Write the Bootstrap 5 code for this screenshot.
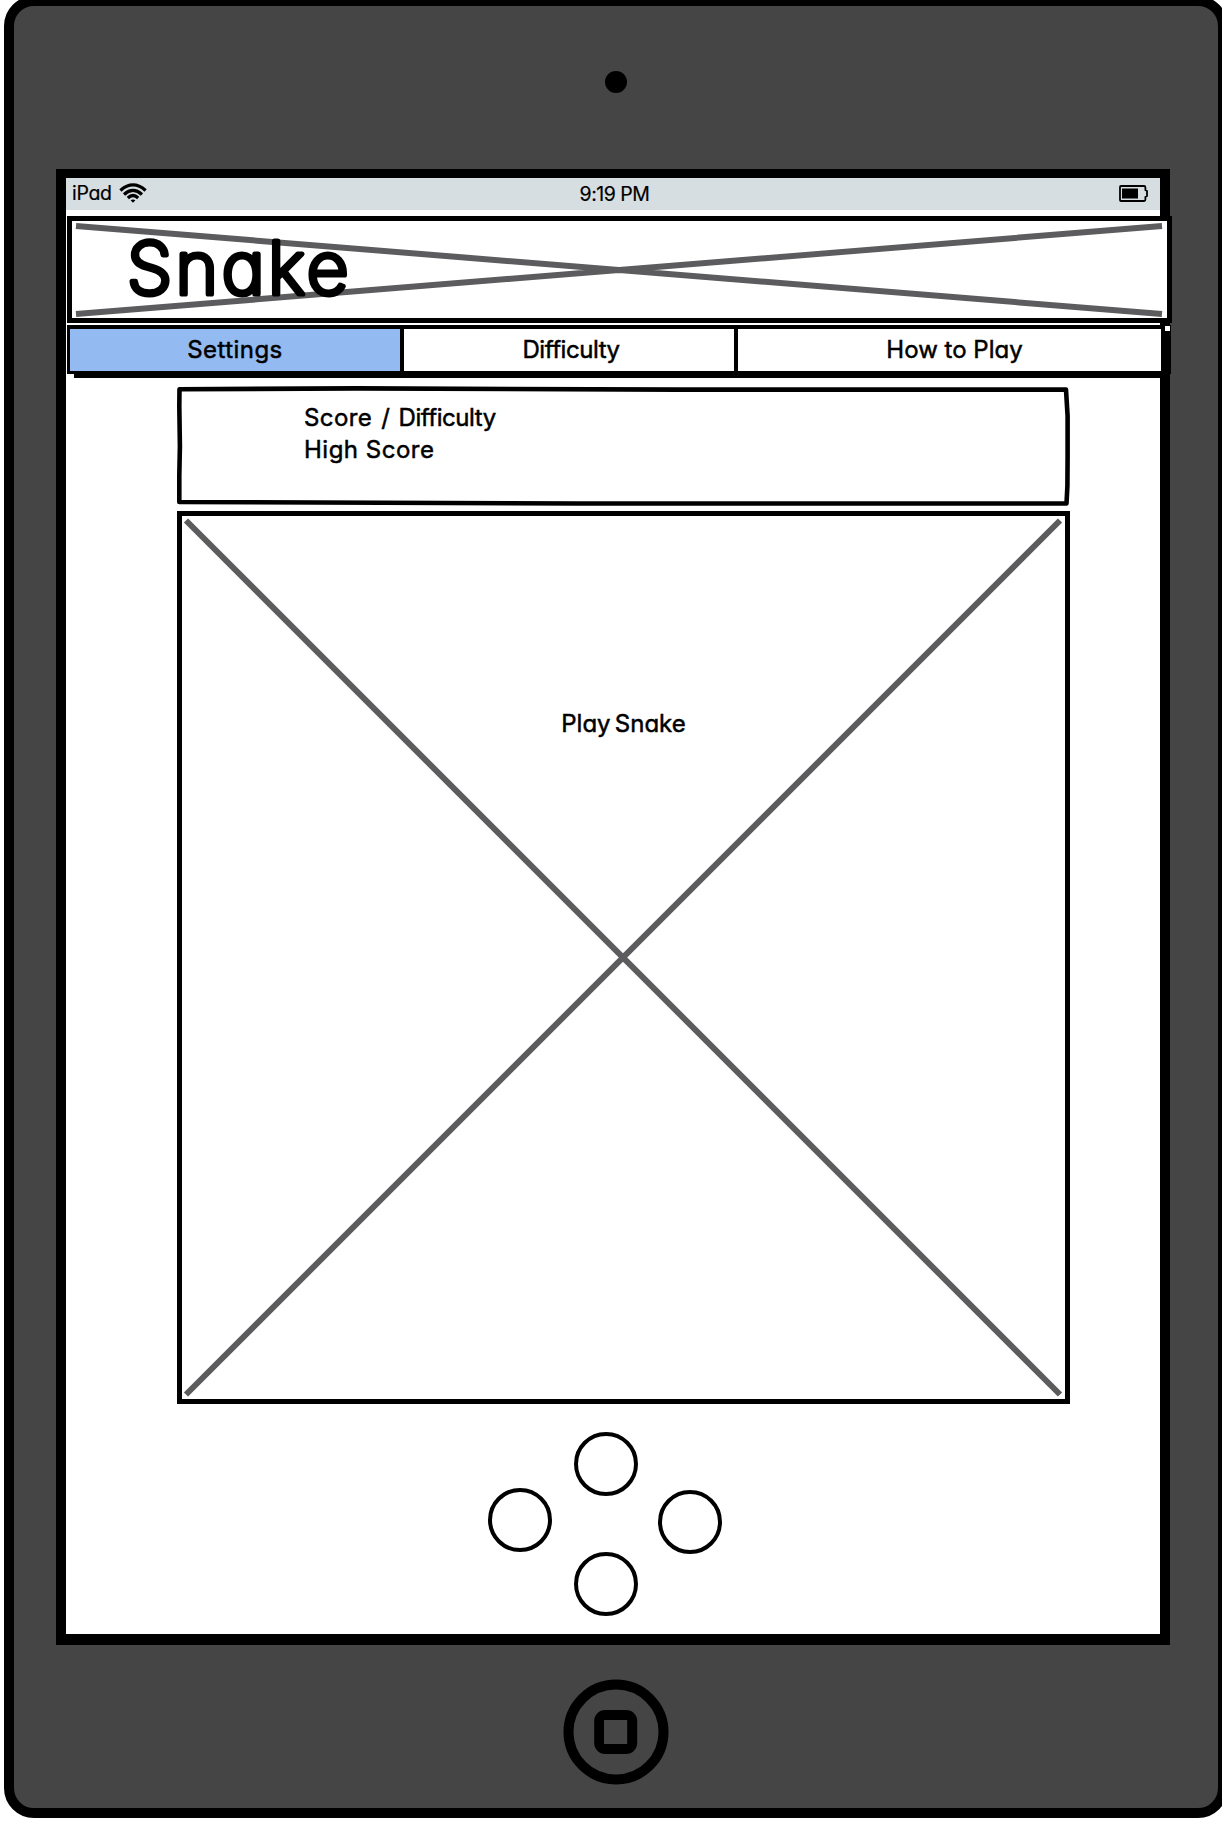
<!DOCTYPE html>
<html lang="en">
<head>
<meta charset="utf-8">
<meta name="viewport" content="width=device-width, initial-scale=1">
<title>Snake</title>
<link href="https://cdn.jsdelivr.net/npm/bootstrap@5.3.0/dist/css/bootstrap.min.css" rel="stylesheet">
<style>
  html, body { height: 1822px; overflow: hidden; }
  body { background: #fff; color: #000; font-family: Inter, "Open Sans", sans-serif; font-feature-settings: "cv11", "ss03"; }
  .device { width: 1224px; height: 1822px; margin: -4px 0 0 4px; border: 10px solid #000; border-radius: 30px; background: #454545; flex: none; }
  .bezel-top { height: 163px; }
  .bezel-top, .bezel-bottom { width: 1204px; }
  .camera { width: 22px; height: 22px; background: #000; margin-top: -11px; }
  .screen { width: 1114px; height: 1476px; margin-left: 42px; border: solid #000; border-width: 9px 10px 11px; background: #fff; flex: none; }
  .statusbar { height: 32px; background: #d7dee1; font-size: 19.5px; line-height: 32px; flex: none; margin-bottom: 6px; padding: 0 12px 2px 6px; }
  .statusbar > div { width: 33.333%; }
  .net { margin-right: 7px; letter-spacing: -.3px; -webkit-text-stroke: .2px #000; }
  .clock { letter-spacing: -.5px; position: relative; left: 4.500px; -webkit-text-stroke: .2px #000; }
  .sketch { position: relative; flex: none; }
  .sketch > svg { position: absolute; inset: 0; width: 100%; height: 100%; overflow: visible; }
  .banner { width: 1105px; height: 107px; margin-left: 1px; border: 5px solid #000; background: #fff; margin-bottom: 2px; }
  .banner > svg { left: -5px; top: -5px; width: 1105px; height: 107px; }
  .banner text { font-size: 72.5px; font-weight: 200; stroke: #000; stroke-width: 5.2px; stroke-linejoin: round; stroke-linecap: round; }
  .tabs { width: 1104px; height: 49px; margin-left: 1px; border: solid #000; border-width: 4px 10px 3px 3px; flex: none; background: #fff; position: relative; }
  .tabs::after { content: ""; position: absolute; right: -9px; top: -3px; width: 5px; height: 5px; background: #fff; }
  .tabs .nav-link { padding: 0; color: #000; font-size: 24px; line-height: 42px; border-radius: 0; text-align: center; -webkit-text-stroke: .5px #000; }
  .tab-a { width: 330px; background: #94baf2; letter-spacing: .45px; }
  .tab-b { width: 338px; border: solid #000; border-width: 0 4px; }
  .tabs .tab-b { letter-spacing: -.45px; padding-left: 4px; }
  .tab-c { flex: 1; }
  .tabs .tab-c { padding-left: 10px; }
  .tab-rule { height: 4px; margin-left: 8px; background: #000; margin-bottom: 8px; flex: none; }
  .score { width: 893px; height: 120px; margin-left: 111px; margin-bottom: 5px; padding: 16px 0 0 127px; font-size: 24px; line-height: 32px; -webkit-text-stroke: .5px #000; }
  .score .line-a { letter-spacing: -.45px; word-spacing: 2.8px; }
  .score .label { letter-spacing: .4px; }
  .score .line-b { letter-spacing: .5px; }
  .board { width: 893px; height: 893px; margin-left: 111px; border: 5px solid #000; font-size: 24px; padding-top: 190px; line-height: 36px; -webkit-text-stroke: .5px #000; word-spacing: -2.500px; }
  .board > svg { left: -5px; top: -5px; width: 893px; height: 893px; }
  .board p { position: relative; }
  .pad { width: 234px; margin: 28px 0 0 422px; flex: none; }
  .key { width: 64px; height: 64px; border: 4px solid #000; background: #fff; border-radius: 50%; padding: 0; }
  .key-up, .key-down { margin-left: 2px; }
  .pad-mid { height: 66px; margin: -8px 0 -2px; }
  .home { display: block; margin-top: 34px; }
</style>
</head>
<body>
<div class="device d-flex flex-column">
  <div class="bezel-top d-flex justify-content-center align-items-center">
    <div class="camera rounded-circle"></div>
  </div>

  <main class="screen d-flex flex-column">
    <div class="statusbar d-flex">
      <div class="d-flex align-items-center"><span class="net">iPad</span>
        <svg class="wifi" width="28" height="20" viewBox="0 0 28 20" fill="none" stroke="#000" stroke-width="3.300"><path d="M1.400 7.400Q14-3.600 26.600 7.400M5 11.400Q14 3.400 23 11.400M8.800 15Q14 10.200 19.200 15"/><path d="M11.600 17.300Q14 15.600 16.400 17.300L14 19.800Z" fill="#000" stroke="none"/></svg>
      </div>
      <div class="text-center"><span class="clock">9:19 PM</span></div>
      <div class="d-flex justify-content-end align-items-center">
        <svg class="battery" width="29" height="17" viewBox="0 0 29 17"><path d="M2 1H25Q26.400 1 26.400 2.500V5L28 6V11L26.400 12V14.500Q26.400 16 25 16H2Q1 16 1 15V2Q1 1 2 1Z" fill="none" stroke="#000" stroke-width="1.800"/><path d="M3 3.500H19V13.500H3Z"/></svg>
      </div>
    </div>

    <header class="sketch banner">
      <svg viewBox="0 0 1105 107"><path d="M9 10L1095 98M9 98L1095 10" stroke="#5c5c5e" stroke-width="6"/><text x="60" y="78" textLength="221.500">Snake</text></svg>
    </header>

    <nav class="tabs nav flex-nowrap">
      <a class="nav-link tab-a active" href="#">Settings</a>
      <a class="nav-link tab-b" href="#">Difficulty</a>
      <a class="nav-link tab-c" href="#">How to Play</a>
    </nav>
    <div class="tab-rule"></div>

    <section class="sketch score">
      <svg viewBox="0 0 893 120" fill="none" stroke="#000" stroke-width="4.600" stroke-linejoin="round"><path d="M2.500 3.200L180 2.400L500 3.600H889L890.600 30V70L890.400 100L889.500 117.500L400 117.500L2.300 116V90L2.900 60L2.300 20Z"/></svg>
      <div class="line-a"><span class="label">Score</span> / Difficulty</div>
      <div class="line-b">High Score</div>
    </section>

    <section class="sketch board text-center">
      <svg viewBox="0 0 893 893" stroke="#5c5c5e" stroke-width="6"><path d="M9 9.500L883 883.500M883 9.500L9 883.500"/></svg>
      <p class="m-0">Play Snake</p>
    </section>

    <div class="pad d-flex flex-column align-items-center">
      <button class="key key-up" aria-label="Up"></button>
      <div class="pad-mid d-flex justify-content-between w-100">
        <button class="key align-self-start" aria-label="Left"></button>
        <button class="key align-self-end" aria-label="Right"></button>
      </div>
      <button class="key key-down" aria-label="Down"></button>
    </div>
  </main>

  <div class="bezel-bottom d-flex justify-content-center">
    <svg class="home" width="106" height="106" viewBox="0 0 106 106" fill="none" stroke="#000" stroke-width="10"><circle cx="53" cy="53" r="47.500"/><rect x="36.200" y="36" width="33" height="34" rx="6"/><path d="M41 41h23v24h-23z" fill="#454545" stroke="none"/></svg>
  </div>
</div>
<script src="https://cdn.jsdelivr.net/npm/bootstrap@5.3.0/dist/js/bootstrap.bundle.min.js"></script>
</body>
</html>
